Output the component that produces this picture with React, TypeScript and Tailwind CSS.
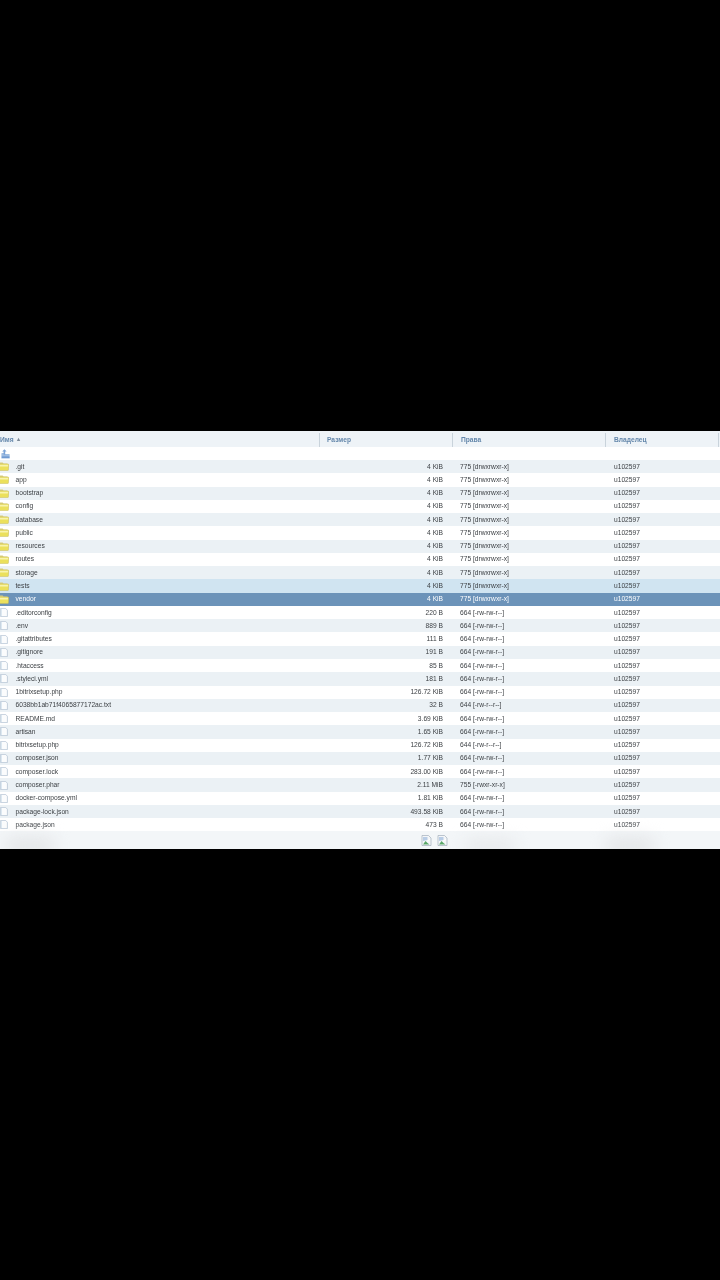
const DIR = "775 [drwxrwxr-x]";
const RW = "664 [-rw-rw-r--]";

const rows: { name: string; size: string; perms: string; dir?: boolean }[] = [
  { name: ".git", size: "4 KiB", perms: DIR, dir: true },
  { name: "app", size: "4 KiB", perms: DIR, dir: true },
  { name: "bootstrap", size: "4 KiB", perms: DIR, dir: true },
  { name: "config", size: "4 KiB", perms: DIR, dir: true },
  { name: "database", size: "4 KiB", perms: DIR, dir: true },
  { name: "public", size: "4 KiB", perms: DIR, dir: true },
  { name: "resources", size: "4 KiB", perms: DIR, dir: true },
  { name: "routes", size: "4 KiB", perms: DIR, dir: true },
  { name: "storage", size: "4 KiB", perms: DIR, dir: true },
  { name: "tests", size: "4 KiB", perms: DIR, dir: true },
  { name: "vendor", size: "4 KiB", perms: DIR, dir: true },
  { name: ".editorconfig", size: "220 B", perms: RW },
  { name: ".env", size: "889 B", perms: RW },
  { name: ".gitattributes", size: "111 B", perms: RW },
  { name: ".gitignore", size: "191 B", perms: RW },
  { name: ".htaccess", size: "85 B", perms: RW },
  { name: ".styleci.yml", size: "181 B", perms: RW },
  { name: "1bitrixsetup.php", size: "126.72 KiB", perms: RW },
  { name: "6038bb1ab71f4065877172ac.txt", size: "32 B", perms: "644 [-rw-r--r--]" },
  { name: "README.md", size: "3.69 KiB", perms: RW },
  { name: "artisan", size: "1.65 KiB", perms: RW },
  { name: "bitrixsetup.php", size: "126.72 KiB", perms: "644 [-rw-r--r--]" },
  { name: "composer.json", size: "1.77 KiB", perms: RW },
  { name: "composer.lock", size: "283.00 KiB", perms: RW },
  { name: "composer.phar", size: "2.11 MiB", perms: "755 [-rwxr-xr-x]" },
  { name: "docker-compose.yml", size: "1.81 KiB", perms: RW },
  { name: "package-lock.json", size: "493.58 KiB", perms: RW },
  { name: "package.json", size: "473 B", perms: RW },
];

function FolderIcon() {
  return (
    <svg width="10" height="9" viewBox="0 0 10 9" className="ml-[-1px] shrink-0">
      <path d="M0.5 3 L0.5 1.2 Q0.5 0.5 1.2 0.5 L3.6 0.5 L4.6 1.5 L8 1.5 Q8.9 1.5 8.9 2.4 L8.9 3 Z" fill="#d9cf7c" />
      <path d="M0.3 2.6 Q0.3 2.1 0.9 2.1 L9.1 2.1 Q9.7 2.1 9.7 2.7 L9.4 7.9 Q9.3 8.6 8.6 8.6 L1 8.6 Q0.4 8.6 0.4 7.9 Z" fill="#ebe05c" stroke="#c7bb5a" strokeWidth="0.5" />
      <path d="M1 2.8 L9 2.8 L8.9 4.4 L1 4.4 Z" fill="#f8f3ac" />
    </svg>
  );
}

function FileIcon() {
  return (
    <svg width="8" height="9" viewBox="0 0 8 9" className="shrink-0">
      <path d="M0.6 0.4 L5.6 0.4 L7.4 2.2 L7.4 8.6 L0.6 8.6 Z" fill="#fbfcfd" stroke="#aebfd0" strokeWidth="0.7" />
      <path d="M1.4 1 L1.4 8" stroke="#d6e3ee" strokeWidth="0.9" />
    </svg>
  );
}

function UpIcon() {
  return (
    <svg width="9" height="10" viewBox="0 0 9 10" className="ml-px shrink-0">
      <path d="M0.4 4.6 Q0.4 4 1 4 L2.8 4 L3.6 5 L8.2 5 Q8.7 5 8.7 5.5 L8.7 9.4 L0.4 9.4 Z" fill="#9dbce2" />
      <path d="M2.6 5.6 L2.6 2.6 L1.2 2.6 L3.4 0.2 L5.6 2.6 L4.2 2.6 L4.2 6 Z" fill="#7ba3d6" />
      <path d="M0.8 7.4 L8.4 7.4 L8.4 9 L0.8 9 Z" fill="#6f9ad2" />
    </svg>
  );
}

function BrokenImage() {
  return (
    <svg width="11" height="11" viewBox="0 0 11 11">
      <path d="M1 0.5 L7.5 0.5 L10 3 L10 10.5 L1 10.5 Z" fill="#f4f6f8" stroke="#a2afbb" strokeWidth="0.7" />
      <path d="M2 2 L6.5 2 L6.5 5 L2 6 Z" fill="#b9cde6" />
      <path d="M2 9.5 L4.5 6 L6.5 8 L8.5 9.5 Z" fill="#5aa869" />
      <path d="M6 6.5 L9 4" stroke="#ffffff" strokeWidth="1" />
    </svg>
  );
}

function rowClass(i: number) {
  if (i === 10) return "bg-[#6c93b9] text-white";
  if (i === 9) return "bg-[#d0e4f1] text-[#3d4145]";
  return i % 2 === 0 ? "bg-[#ebf1f5] text-[#3d4145]" : "bg-white text-[#3d4145]";
}

export default function App() {
  return (
    <div className="flex h-[1280px] items-center bg-black font-['Liberation_Sans',Arial,sans-serif] text-[6.67px]">
      <div className="relative flex h-[418px] w-full flex-col overflow-hidden bg-white blur-[0.4px]">
        {/* Header */}
        <div className="grid h-4 shrink-0 grid-cols-[319px_133px_153px_113px_2px] bg-[#eef3f7] pt-[1.5px] font-bold text-[#6487ab]">
          <div className="flex items-center gap-[3px]">
            Имя
            <span className="text-[6px] text-[#7d8a98]">▴</span>
          </div>
          <div className="flex items-center border-l border-[#c9d3db] pl-[7px]">Размер</div>
          <div className="flex items-center border-l border-[#c9d3db] pl-2">Права</div>
          <div className="flex items-center border-l border-[#c9d3db] pl-2">Владелец</div>
          <div className="border-l border-[#c9d3db]" />
        </div>

        {/* Up row */}
        <div className="flex h-[13px] shrink-0 items-center bg-white">
          <UpIcon />
        </div>

        {rows.map((row, i) => (
          <div
            key={row.name}
            className={`grid h-[13.27px] shrink-0 grid-cols-[319px_133px_153px_113px] items-center ${rowClass(i)}`}
          >
            <div className="flex items-center">
              {row.dir ? <FolderIcon /> : <FileIcon />}
              <span className={row.dir ? "ml-[6.5px]" : "ml-[7.5px]"}>{row.name}</span>
            </div>
            <div className="pr-[9px] text-right">{row.size}</div>
            <div className="pl-2">{row.perms}</div>
            <div className="pl-[9px]">u102597</div>
          </div>
        ))}

        {/* Footer */}
        <div className="relative flex flex-1 items-center justify-center bg-[#f3f6f8] pl-[148px]">
          <div className="absolute bottom-[-6px] left-[5px] h-[18px] w-[50px] rounded-full bg-[#e4e6e8] blur-[8px]" />
          <div className="absolute bottom-[-6px] left-[465px] h-[16px] w-[50px] rounded-full bg-[#e7e9eb] blur-[8px]" />
          <div className="absolute bottom-[-6px] left-[605px] h-[18px] w-[50px] rounded-full bg-[#e4e6e8] blur-[8px]" />
          <div className="relative flex items-center gap-[5px]">
            <BrokenImage />
            <BrokenImage />
          </div>
        </div>
      </div>
    </div>
  );
}
